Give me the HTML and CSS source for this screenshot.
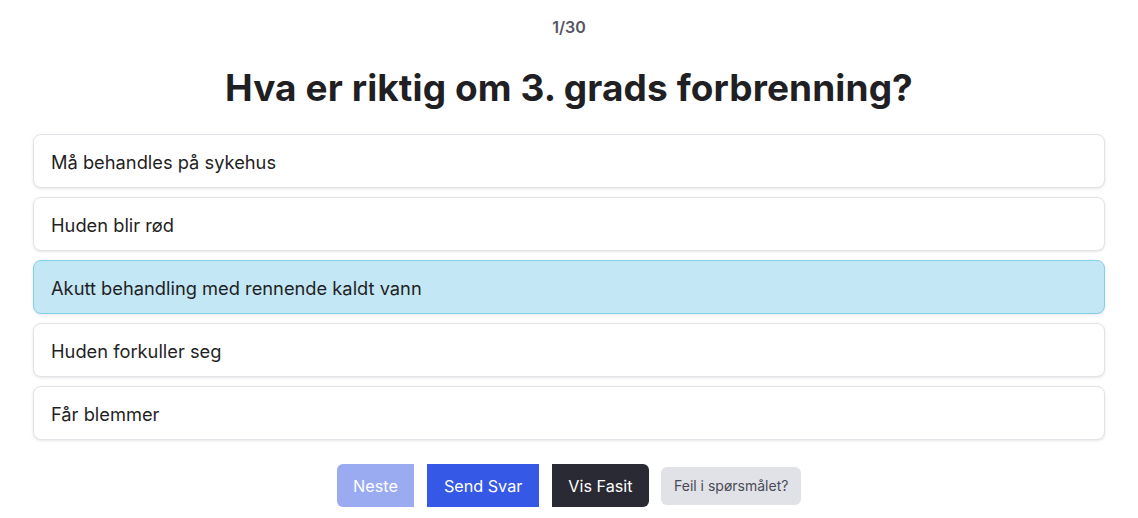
FILE: index.html
```
<!DOCTYPE html>
<html lang="no">

<head>
    <meta charset="UTF-8">
    <meta name="viewport" content="width=device-width, initial-scale=1.0">
    <title>Quiz</title>
    <link rel="stylesheet" href="styles.css">
</head>

<body>

    <div class="quiz-container">
        <p class="counter">1/30</p>
        <h1 class="question">Hva er riktig om 3. grads forbrenning?</h1>

        <div class="options">
            <div class="option">Må behandles på sykehus</div>
            <div class="option">Huden blir rød</div>
            <div class="option selected">Akutt behandling med rennende kaldt vann</div>
            <div class="option">Huden forkuller seg</div>
            <div class="option">Får blemmer</div>
        </div>

        <div class="actions">
            <div class="btn-group">
                <button class="btn btn-next" disabled>Neste</button>
                <button class="btn btn-send">Send Svar</button>
                <button class="btn btn-fasit">Vis Fasit</button>
            </div>
            <button class="btn-report">Feil i spørsmålet?</button>
        </div>
    </div>

</body>

</html>
```

FILE: styles.css
```
body {
    font-family: 'Inter', 'Liberation Sans', sans-serif;
    background-color: #ffffff;
    color: #1f1f24;
    margin: 0;
}

.quiz-container {
    width: 1072px;
    margin: 0 auto;
    padding-top: 15px;
}

.counter {
    margin: 0;
    text-align: center;
    font-size: 16px;
    line-height: 24px;
    font-weight: 600;
    color: #55555f;
}

.question {
    margin: 27px 0 24px;
    text-align: center;
    font-size: 37px;
    line-height: 44px;
    font-weight: 700;
    letter-spacing: 0.1px;
    color: #1f1f24;
}

.options {
    display: flex;
    flex-direction: column;
    gap: 9px;
}

.option {
    height: 54px;
    box-sizing: border-box;
    display: flex;
    align-items: center;
    padding: 1px 17px 0;
    font-size: 18.3px;
    border: 1px solid #e2e3e8;
    border-radius: 8px;
    background-color: #ffffff;
    box-shadow: 0 1px 3px rgba(0, 0, 0, 0.1);
    cursor: pointer;
}

.option.selected {
    background-color: #c3e7f5;
    border-color: #82d1ec;
}

.actions {
    display: flex;
    justify-content: center;
    align-items: center;
    gap: 12px;
    margin-top: 24px;
}

.btn-group {
    display: flex;
    gap: 13px;
}

.btn {
    height: 43px;
    padding: 0 16.5px;
    border: none;
    font-family: inherit;
    font-size: 16.2px;
    color: #ffffff;
    cursor: pointer;
}

.btn-next {
    background-color: #9aabf2;
    border-radius: 6px 0 0 6px;
    cursor: default;
}

.btn-send {
    background-color: #3558e6;
}

.btn-fasit {
    background-color: #2a2a35;
    border-radius: 0 6px 6px 0;
}

.btn-report {
    height: 38px;
    padding: 0 13px;
    border: none;
    border-radius: 6px;
    background-color: #e1e2e8;
    color: #4a4a55;
    font-family: inherit;
    font-size: 14px;
    cursor: pointer;
}
```
